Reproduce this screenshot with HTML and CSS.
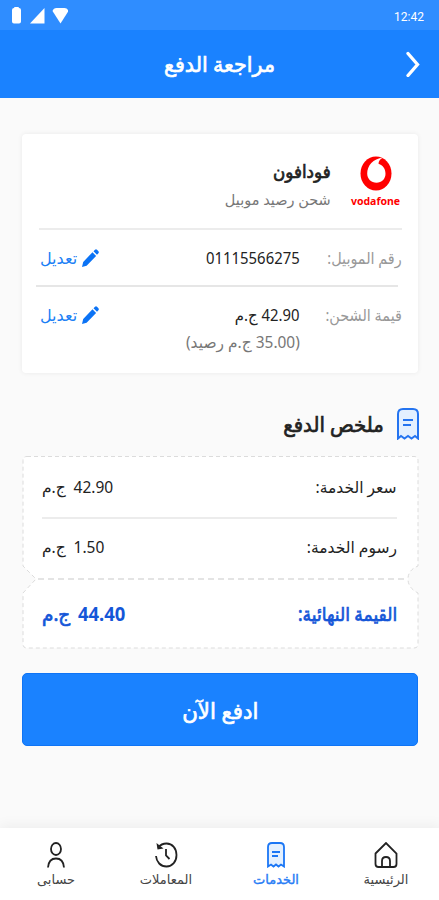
FILE: index.html
```
<!DOCTYPE html>
<html lang="ar" dir="rtl">
<head>
<meta charset="UTF-8">
<meta name="viewport" content="width=device-width, initial-scale=1.0">
<title>مراجعة الدفع</title>
<link rel="stylesheet" href="styles.css">
</head>
<body>
<div class="screen">

  <div class="status-bar">
    <span class="time">12:42</span>
    <svg class="status-icons" width="57" height="18" viewBox="0 0 57 18">
      <path d="M3 1Q3 0 4 0h3q1 0 1 1 2 0 2 2v11.500q0 2-2 2H3q-2 0-2-2V3q0-2 2-2z"/>
      <path d="M33.500 1v15.500H19z"/>
      <path d="M41.500 4q1-3 4-3h8q3 0 4 3L49.500 16.500z"/>
    </svg>
  </div>

  <header class="header">
    <h1>مراجعة الدفع</h1>
    <svg class="chevron" width="14" height="26" viewBox="0 0 14 26"><path d="M2 2.500l9.500 11L2 24.500"/></svg>
  </header>

  <main class="content">
    <section class="card">
      <div class="provider">
        <div class="logo">
          <svg width="32" height="35" viewBox="0 0 32 35">
            <ellipse cx="16" cy="17.500" rx="15.500" ry="17" fill="#f00"/>
            <path d="M23 1.800c-3 1.200-4.500 3.500-4.500 6 4.500 1.500 7 5.200 7 10 0 5.200-3.800 9-9 9s-9.300-4-9.300-9.300C7.200 10 13 2.500 23 1.800z" fill="#fff"/>
          </svg>
          <span>vodafone</span>
        </div>
        <div class="provider-text">
          <h2>فودافون</h2>
          <p>شحن رصيد موبيل</p>
        </div>
      </div>

      <div class="row">
        <span class="label"><span class="narrow">رقم الموبيل:</span></span>
        <span class="value"><span class="narrow">01115566275</span></span>
        <a class="edit">
          <svg width="17" height="18" viewBox="0 0 17 18"><path d="M0 18l1.200-5L10.500 3.200l3.600 3.700L4.600 16.700zM11.500 2.200L13 .7q1-1 2 0l1.400 1.500q.9 1 0 2L15 5.800z"/></svg>
          <span>تعديل</span>
        </a>
      </div>
      <div class="divider"></div>

      <div class="row row-amount">
        <span class="label"><span class="narrow">قيمة الشحن:</span></span>
        <span class="value"><span class="narrow">42.90 ج.م</span><small>(35.00 ج.م رصيد)</small></span>
        <a class="edit">
          <svg width="17" height="18" viewBox="0 0 17 18"><path d="M0 18l1.200-5L10.500 3.200l3.600 3.700L4.600 16.700zM11.500 2.200L13 .7q1-1 2 0l1.400 1.500q.9 1 0 2L15 5.800z"/></svg>
          <span>تعديل</span>
        </a>
      </div>
    </section>

    <div class="section-title">
      <svg class="receipt" width="22" height="32" viewBox="0 0 22 32">
        <path class="paper" d="M1 30.500V6q0-5 5-5h10q5 0 5 5v24.500l-3-2.500-3.500 2.500L11 28l-3.500 2.500L4 28z"/>
        <path d="M6 12h10M6 17h8"/>
      </svg>
      <h2>ملخص الدفع</h2>
    </div>

    <section class="ticket">
      <svg class="ticket-shape" width="397" height="194" viewBox="0 0 397 194">
        <path class="outline" d="M5 .5H392Q396 .5 396 4.500V110Q386 114 386 123T396 137V188Q396 192 392 192H5Q1 192 1 188V137L14 123 1 110V4.500Q1 .5 5 .5z"/>
        <path class="tear" d="M16 123H384"/>
      </svg>
      <div class="ticket-row">
        <span class="service">سعر الخدمة:</span>
        <span class="price"><span>42.90</span><span>ج.م</span></span>
      </div>
      <div class="ticket-row fees">
        <span class="service">رسوم الخدمة:</span>
        <span class="price"><span>1.50</span><span>ج.م</span></span>
      </div>
      <div class="ticket-row total">
        <span class="service">القيمة النهائية:</span>
        <span class="price"><b>44.40</b><span>ج.م</span></span>
      </div>
    </section>

    <button class="pay-button"><span>ادفع الآن</span></button>
  </main>

  <nav class="tabs">
    <a class="tab">
      <svg width="24" height="26" viewBox="0 0 24 26"><path d="M1.500 11.500L12 1l10.500 10.500V22q0 3-3 3h-15q-3 0-3-3zM8 25v-6q0-4 4-4t4 4v6"/></svg>
      <span>الرئيسية</span>
    </a>
    <a class="tab active">
      <svg width="18" height="26" viewBox="0 0 18 26"><path class="paper" d="M1 24.500V5q0-4 4-4h8q4 0 4 4v19.500l-3-2-2.500 2-2.500-2-2.500 2-2.500-2z"/><path d="M5 10h8M5 14h6"/></svg>
      <span>الخدمات</span>
    </a>
    <a class="tab">
      <svg width="24" height="26" viewBox="0 0 24 26"><path d="M4 5.500C7 2 10 1.500 12.500 1.500c6 0 10 5 10 11.500s-4 11.500-10 11.500S2.500 20 2 14M12 7v6.500l3.500 3.500"/><path class="solid" d="M2.500 1l1 6.500 6-1z"/></svg>
      <span>المعاملات</span>
    </a>
    <a class="tab">
      <svg width="18" height="26" viewBox="0 0 18 26"><ellipse cx="9" cy="7" rx="5" ry="6"/><path d="M1 25.500C1.500 19 4 16.500 9 16.500s7.500 2.500 8 9"/></svg>
      <span>حسابى</span>
    </a>
  </nav>

</div>
</body>
</html>
```

FILE: styles.css
```
* {
  box-sizing: border-box;
}
body, h1, h2, p {
  margin: 0;
  padding: 0;
}
body {
  font-family: 'Noto Sans', 'DejaVu Sans', sans-serif;
  background: #fafafa;
  color: #222;
}
svg {
  display: block;
  flex-shrink: 0;
}
/* the bold Arabic face is too wide, so thicken the regular one */
h1, h2, .total, .pay-button {
  font-weight: normal;
  -webkit-text-stroke: 0.7px currentColor;
}
.narrow {
  display: inline-block;
  transform: scaleX(0.93);
  transform-origin: right;
}
.screen {
  width: 439px;
  height: 900px;
  display: flex;
  flex-direction: column;
  overflow: hidden;
}

/* top */
.status-bar {
  height: 30px;
  padding: 2px 15px 0 11px;
  display: flex;
  align-items: center;
  justify-content: space-between;
  background: #2f8dff;
  color: #fff;
}
.time {
  font-family: Roboto, sans-serif;
  font-size: 12px;
  padding-top: 1px;
}
.status-icons {
  fill: #fff;
}
.header {
  height: 68px;
  padding: 0 19px;
  display: grid;
  grid-template-columns: 14px 1fr 14px;
  align-items: center;
  background: #1a82ff;
  color: #fff;
}
.header h1 {
  grid-column: 2;
  grid-row: 1;
  text-align: center;
  font-size: 21.5px;
  line-height: 30px;
  transform: scaleX(0.96);
}
.chevron {
  grid-column: 1;
  grid-row: 1;
  fill: none;
  stroke: #fff;
  stroke-width: 3.3;
  stroke-linecap: round;
}
.content {
  flex: 1;
  padding: 36px 21px 0 22px;
}

/* details card */
.card {
  height: 239px;
  padding: 0 16px 0 17px;
  background: #fff;
  border-radius: 4px;
  box-shadow: 0 0 5px rgba(0,0,0,0.07);
}
.provider {
  height: 96px;
  display: flex;
  padding-top: 22px;
  border-bottom: 2px solid #ececec;
}
.logo {
  width: 53px;
  display: flex;
  flex-direction: column;
  align-items: center;
  color: #f00;
  font-size: 10.5px;
  font-weight: bold;
  line-height: 20px;
}
.provider-text {
  margin-right: 18px;
}
.provider-text h2 {
  font-size: 18px;
  line-height: 31px;
  transform: scaleX(0.93);
  transform-origin: right;
}
.provider-text p {
  font-size: 15px;
  line-height: 24px;
  color: #777;
  transform: scaleX(0.965);
  transform-origin: right;
}
.row {
  height: 55px;
  display: flex;
  padding-top: 16px;
  font-size: 16px;
  line-height: 24px;
}
.divider {
  height: 2px;
  margin: 0 4px 0 -3px;
  background: #e6e6e6;
}
.row-amount {
  height: 86px;
}
.label {
  width: 102px;
  color: #999;
  white-space: nowrap;
}
.label .narrow {
  transform: scaleX(0.9);
}
.value {
  flex: 1;
  white-space: nowrap;
}
.value small {
  display: block;
  font-size: 16px;
  line-height: 30px;
  color: #777;
  transform: scaleX(0.966);
  transform-origin: right;
}
.edit {
  display: flex;
  gap: 5px;
  padding-left: 1px;
  color: #1a80f5;
}
.edit svg {
  margin-top: 3px;
  fill: #0b73f5;
}

/* payment summary */
.section-title {
  height: 83px;
  padding-top: 19px;
  margin-right: -1px;
  display: flex;
  align-items: center;
  gap: 13px;
}
.section-title h2 {
  font-size: 20.5px;
  line-height: 30px;
  transform: scaleX(0.96);
  transform-origin: right;
}
.receipt {
  fill: none;
  stroke: #2474f0;
  stroke-width: 2;
}
.paper {
  fill: #e3f0ff;
}
.ticket {
  position: relative;
  height: 193px;
  padding: 0 21px 0 20px;
}
.ticket-shape {
  position: absolute;
  top: 0;
  left: 0;
}
.outline {
  fill: #fff;
  stroke: #dcdcdc;
  stroke-dasharray: 4 3;
}
.tear {
  stroke: #dcdcdc;
  stroke-width: 1.5;
  stroke-dasharray: 6 4;
}
.ticket-row {
  position: relative;
  height: 63px;
  display: flex;
  align-items: center;
  justify-content: space-between;
  border-bottom: 2px solid #ececec;
  font-size: 16px;
}
.service {
  transform: scaleX(0.97);
  transform-origin: right;
}
.ticket-row.fees {
  height: 56px;
  border-bottom: none;
}
.ticket-row.total {
  height: 76px;
  padding-top: 2px;
  border-bottom: none;
  color: #1456d8;
  font-size: 19px;
}
.total .service {
  font-size: 19px;
  transform: scaleX(0.9);
}
.total b {
  -webkit-text-stroke: 0;
}
.price {
  display: flex;
  gap: 8px;
  transform: scaleX(0.97);
  transform-origin: left;
}
.pay-button {
  display: block;
  width: 100%;
  height: 73px;
  margin-top: 24px;
  border: 1px solid #0f74f5;
  border-radius: 5px;
  background: #1a82ff;
  color: #fff;
  font-family: inherit;
  font-size: 22px;
}
.pay-button span {
  display: inline-block;
  transform: scaleX(0.97);
}

/* bottom tabs */
.tabs {
  height: 72px;
  display: grid;
  grid-template-columns: repeat(4, 110px);
  margin-right: -2px;
  background: #fff;
  box-shadow: 0 -3px 12px rgba(0,0,0,0.05);
}
.tab {
  display: flex;
  flex-direction: column;
  align-items: center;
  padding-top: 14px;
  font-size: 13px;
  line-height: 23px;
  color: #444;
}
.tab svg {
  fill: none;
  stroke: #222;
  stroke-width: 1.8;
}
.tab .solid {
  fill: #222;
  stroke: none;
}
.tab.active {
  color: #287df5;
  -webkit-text-stroke: 0.4px currentColor;
}
.tab.active svg {
  stroke: #1a76f5;
}
.tab .paper {
  fill: #e3f0ff;
}
```
